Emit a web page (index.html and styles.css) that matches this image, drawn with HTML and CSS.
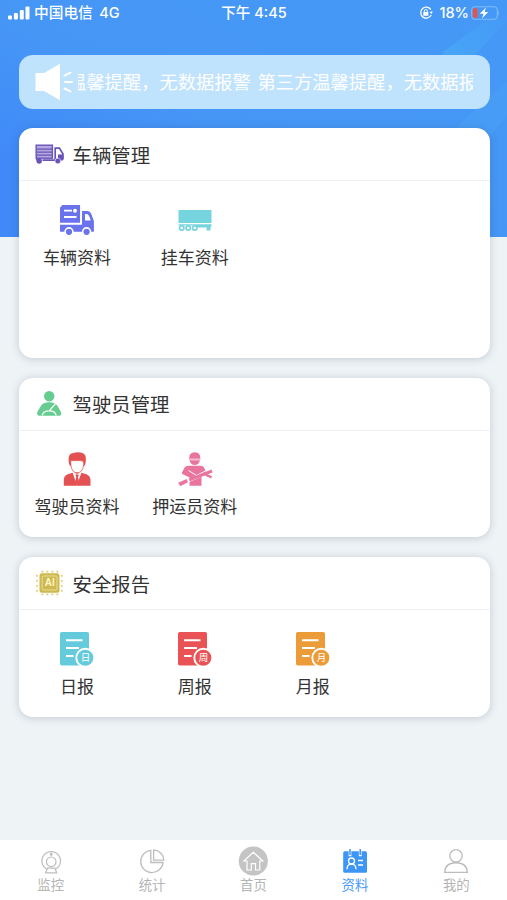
FILE: index.html
```html
<!DOCTYPE html>
<html lang="zh-CN">
<head>
<meta charset="utf-8">
<title>资料</title>
<link rel="stylesheet" href="styles.css">
</head>
<body>
<div class="app">
  <svg class="backdrop" viewBox="0 0 507 237" preserveAspectRatio="none">
    <defs>
      <linearGradient id="sky" x1="0" y1="0.7" x2="0.7" y2="0"><stop offset="0" stop-color="#3f89f8"/><stop offset="0.45" stop-color="#4696f6"/><stop offset="1" stop-color="#4598f5"/></linearGradient>
      <linearGradient id="ray" x1="0" y1="1" x2="1" y2="0"><stop offset="0" stop-color="#48a8f7"/><stop offset="1" stop-color="#48a8f7" stop-opacity="0.1"/></linearGradient>
    </defs>
    <rect width="507" height="237" fill="url(#sky)"/>
    <path d="M443 52 490 17 507 20 466 65 443 72Z" fill="url(#ray)"/>
    <path d="M455 128 507 82V116L489 137Z" fill="#48a0f7" opacity="0.7"/>
  </svg>

  <header class="status">
    <div class="status-side">
      <svg class="signal" width="22" height="14" viewBox="0 0 22 14" fill="#fff"><rect x="0" y="9.5" width="4" height="4" rx="1"/><rect x="5.9" y="7" width="4" height="6.5" rx="1"/><rect x="11.8" y="4" width="4" height="9.5" rx="1"/><rect x="17.5" y="0.5" width="4" height="13" rx="1"/></svg>
      <span class="carrier">中国电信</span><span>4G</span>
    </div>
    <div class="clock">下午 4:45</div>
    <div class="status-side status-right">
      <svg width="14" height="14" viewBox="0 0 14 14" fill="none" stroke="#fff" stroke-width="1.3"><path d="M11.8 3.6A5.5 5.5 0 1 0 12.2 9"/><path d="m10.6 6 2.1 2 1-2.8Z" fill="#fff" stroke="none"/><rect x="4.3" y="6" width="5" height="3.8" rx=".6" fill="#fff" stroke="none"/><path d="M5.3 6.2V5a1.5 1.5 0 0 1 3 0v1.2" stroke-width="1"/></svg>
      <span class="percent">18%</span>
      <svg width="29" height="14" viewBox="0 0 29 14"><rect x=".7" y=".7" width="25.6" height="12.6" rx="3.5" fill="none" stroke="#7dbcf9" stroke-width="1.1"/><path d="M27.4 4.5q1.8 2.5 0 5Z" fill="#7dbcf9"/><rect x="2" y="2.2" width="4.4" height="9.6" rx="1.3" fill="#ef5140"/><path d="M15 1.5 8.7 7.8h3.8L11 12.6l6.2-6.5h-3.7Z" fill="#fff"/></svg>
    </div>
  </header>

  <section class="notice">
    <svg width="38" height="38" viewBox="0 0 38 38" fill="#fff"><path d="M.5 10H9L25 .7V37.3L9 28H.5Z"/><path d="m29.5 12.5 6-2.8M30 19h7M29.5 25.5l6 2.8" stroke="#fff" stroke-width="2" stroke-linecap="round"/></svg>
    <div class="ticker"><p>温馨提醒，无数据报警 第三方温馨提醒，无数据报警</p></div>
  </section>

  <main>
    <section class="card card-tall">
      <h2>
        <svg width="30" height="26" viewBox="0 0 30 26"><g transform="translate(0 1.2)"><rect x="1.2" y="3" width="16.2" height="13" fill="#b5a8df" stroke="#6953b8" stroke-width="1.4"/><path d="M2 7h15.5M2 10h15.5M2 13h15.5" stroke="#6953b8" stroke-width="1.3"/><path d="M20.2 17.4V5.9h4.2l3.6 6v5.5" fill="none" stroke="#6953b8" stroke-width="1.7"/><path d="M22.4 8.2h1.6l2.4 4h-4Z" fill="#fff"/><path d="M23 12.3h5v6h-5Z" fill="#6953b8"/><path d="M1 17.6h2M7.5 17.9H20" stroke="#6953b8" stroke-width="1.6"/><circle cx="4.2" cy="18.8" r="2.7" fill="#6953b8"/><circle cx="22.8" cy="18.8" r="2.8" fill="#6953b8" stroke="#fff" stroke-width=".5"/></g></svg>
        车辆管理</h2>
      <div class="grid">
        <a class="item"><svg width="36" height="36" viewBox="0 0 36 36"><path d="M3.5 3H21.2V20.8H1V5.5Z" fill="#6a72ed"/><path d="M1 22.6h22V9h5.3q3 0 4.4 4l2.2 6v10.8H1Z" fill="#6a72ed"/><path d="M22 3v18.7H1" fill="none" stroke="#fff" stroke-width="1.5"/><path d="M26 12h1.8q2.4 0 3.8 6.6H26Z" fill="#fff"/><path d="M5 8.7h8M5 15h12.5" stroke="#fff" stroke-width="1.8"/><circle cx="16" cy="8.7" r="2" fill="#fff"/><g fill="#6a72ed" stroke="#fff" stroke-width="1.6"><circle cx="10" cy="29.8" r="3.9"/><circle cx="27.6" cy="29.8" r="3.9"/></g></svg><span>车辆资料</span></a>
        <a class="item"><svg width="36" height="36" viewBox="0 0 36 36"><path d="M1.5 8h33v13h-33Z" fill="#76d4df"/><path d="M1.5 22.3h33v2.4h-1V28.5h-4v-3H20l-1-2H1.5Z" fill="#76d4df"/><g fill="#fff" stroke="#76d4df" stroke-width="1.7"><circle cx="4.7" cy="26" r="2.2"/><circle cx="11.2" cy="26" r="2.2"/><circle cx="17.7" cy="26" r="2.2"/></g></svg><span>挂车资料</span></a>
      </div>
    </section>

    <section class="card">
      <h2>
        <svg width="30" height="26" viewBox="0 0 30 26"><circle cx="14.2" cy="5.2" r="5.2" fill="#66cc8f"/><path d="M2.4 21 6 14.8q2-3.6 8.2-3.6t8.2 3.6L26 21q1 3.7-2 3.7H4.7q-3.3 0-2.3-3.7Z" fill="#66cc8f"/><path d="M7.2 24.5q.8-4.6 7-4.6t7 4.6M20.3 12.8 14.5 19.6" fill="none" stroke="#fff" stroke-width="1.3"/></svg>
        驾驶员管理</h2>
      <div class="grid">
        <a class="item"><svg width="36" height="36" viewBox="0 0 36 36"><path d="M10.2 13.5Q8 3 13.5 2.2q9.5-2.4 12.5 1.8 1.7 3 .2 9.5l-1 1.5H11.4Z" fill="#e45152"/><path d="M11.8 9.6h9.7l3.2.8v3.4q-1 8-6.5 8t-6.4-8Z" fill="#fff" stroke="#e45152" stroke-width=".8"/><path d="M4.8 34.7V28.7q.3-4.2 4-5.5l4.7-1.4h9l4.7 1.4q3.9 1.3 4.3 5.5v6Z" fill="#e45152"/><path d="m13.2 20.8 4.8 13 4.8-13-4.8 2.2Z" fill="#fff"/><path d="m16.2 24 1.8-.8 1.9.8-.9 2 1 5-1.9 3-1.9-3 1.1-5Z" fill="#e45152"/></svg><span>驾驶员资料</span></a>
        <a class="item"><svg width="36" height="36" viewBox="0 0 36 36"><path d="M12.2 7.4Q12 1.5 17.7 1.3T23.3 7.4Z" fill="#e9759f"/><path d="M12.4 9.3h10.6Q22 14 17.8 14T12.4 9.3Z" fill="#e9759f"/><path d="M12 8h11.5" stroke="#e9759f" stroke-width="1"/><path d="M5 21.5 7.5 16.5q1.3-1.8 4-1.8h12q3.5 0 4.5 4l.5 3-4 2.5v10.5H12.5V26.5l-5-2.5Q4.5 23 5 21.5Z" fill="#e9759f"/><path d="M10.5 31.3 26 24.5" stroke="#fff" stroke-width="1"/><path d="m11.5 19.5 8 5 8.5-4.3" fill="none" stroke="#fff" stroke-width="1"/><path d="M1.2 31.8 9.5 28l1.5 3.2-7.8 4Z" fill="#e9759f"/><path d="M12.5 28.8 35 20" stroke="#e9759f" stroke-width="3"/><path d="m27.5 23 7 3.4" stroke="#e9759f" stroke-width="2.5"/></svg><span>押运员资料</span></a>
      </div>
    </section>

    <section class="card">
      <h2>
        <svg width="30" height="26" viewBox="0 0 30 26"><g stroke="#dccb79" stroke-width="1.7" stroke-dasharray="1.8 3.2"><path d="M6.5 1.6h17M6.5 24.4h17M2 5v17M26.8 5v17"/></g><rect x="4.5" y="3.3" width="20" height="19.4" rx="2.5" fill="#cdb94e"/><rect x="7.2" y="6" width="14.8" height="14" rx="1" fill="none" stroke="#e8dc9a" stroke-width="1"/><text class="chip" x="14.7" y="16.3">AI</text></svg>
        安全报告</h2>
      <div class="grid">
        <a class="item day"><svg width="36" height="36" viewBox="0 0 36 36"><rect x="1" y="1" width="29" height="33.5" rx="1.8" fill="currentColor"/><path d="M7 9.2h16.5M7 17h13M7 24.9h7.5" stroke="#fff" stroke-width="2"/><circle cx="26.3" cy="26.7" r="9" fill="currentColor" stroke="#fff" stroke-width="1.9"/><text class="seal" x="26.4" y="30.3">日</text></svg><span>日报</span></a>
        <a class="item week"><svg width="36" height="36" viewBox="0 0 36 36"><rect x="1" y="1" width="29" height="33.5" rx="1.8" fill="currentColor"/><path d="M7 9.2h16.5M7 17h13M7 24.9h7.5" stroke="#fff" stroke-width="2"/><circle cx="26.3" cy="26.7" r="9" fill="currentColor" stroke="#fff" stroke-width="1.9"/><text class="seal" x="26.4" y="30.3">周</text></svg><span>周报</span></a>
        <a class="item month"><svg width="36" height="36" viewBox="0 0 36 36"><rect x="1" y="1" width="29" height="33.5" rx="1.8" fill="currentColor"/><path d="M7 9.2h16.5M7 17h13M7 24.9h7.5" stroke="#fff" stroke-width="2"/><circle cx="26.3" cy="26.7" r="9" fill="currentColor" stroke="#fff" stroke-width="1.9"/><text class="seal" x="26.4" y="30.3">月</text></svg><span>月报</span></a>
      </div>
    </section>
  </main>

  <nav class="tabs">
    <a><svg width="30" height="30" viewBox="0 0 30 30" fill="none" stroke="#bdbdbd" stroke-width="1.2"><path d="M11 23.2a9.3 9.3 0 1 1 8.4 0"/><circle cx="15.2" cy="15.8" r="4.8"/><circle cx="15.2" cy="8.3" r=".9" fill="#bdbdbd"/><path d="M11.5 22.2h7.4l1.8 4.6h-11Z"/></svg><span>监控</span></a>
    <a><svg width="30" height="30" viewBox="0 0 30 30" fill="none" stroke="#bdbdbd" stroke-width="1.3"><path d="M13.8 4.3a11.2 11.2 0 1 0 12.3 12.2H13.8Z"/><path d="M16.6 3.9a10.6 10.6 0 0 1 10.2 10.3H16.6Z"/></svg><span>统计</span></a>
    <a><svg width="30" height="30" viewBox="0 0 30 30"><circle cx="15.3" cy="15" r="14.6" fill="#c4c4c4"/><path d="M5.8 15 15.3 6.2 24.8 15H21.8V24H17.5V17.7H13.3V24H9V15Z" fill="none" stroke="#fff" stroke-width="1.2"/></svg><span>首页</span></a>
    <a class="active"><svg width="30" height="30" viewBox="0 0 30 30"><rect x="3.2" y="5.2" width="23.8" height="21.6" rx="1.5" fill="#3d95f5"/><path d="M10 5v5.2M20.2 5v5.2" stroke="#fff" stroke-width="2.8"/><path d="M10 3v6M20.2 3v6" stroke="#3d95f5" stroke-width="1.5"/><g fill="none" stroke="#fff" stroke-width="1.3"><circle cx="11.5" cy="15" r="3"/><path d="M7 23.2q0-5 4.5-5t4.5 5M18 14.5h5M18 19h5"/></g></svg><span>资料</span></a>
    <a><svg width="30" height="30" viewBox="0 0 30 30" fill="none" stroke="#bdbdbd" stroke-width="1.4"><circle cx="15" cy="9.8" r="6.2"/><path d="M3.7 26.4q.5-9.6 11.3-9.6t11.3 9.6Z"/></svg><span>我的</span></a>
  </nav>
</div>
</body>
</html>
```
FILE: styles.css
```css
* { box-sizing: border-box; }
body {
  margin: 0;
  font-family: "Noto Sans CJK SC", sans-serif;
  color: #333;
  background: #eef3f6;
}
svg { display: block; flex: none; }
.app {
  position: relative;
  isolation: isolate;
  display: flex;
  flex-direction: column;
  width: 507px;
  height: 900px;
  overflow: hidden;
}
.backdrop {
  position: absolute;
  top: 0;
  left: 0;
  z-index: -1;
  width: 100%;
  height: 237px;
}
.status {
  display: grid;
  grid-template-columns: 1fr auto 1fr;
  align-items: center;
  height: 26px;
  padding: 0 7px 0 8px;
  font: 500 14.5px/26px Inter, "Noto Sans CJK SC", sans-serif;
  color: #fff;
}
.status-side { display: flex; align-items: center; }
.status-right { justify-content: flex-end; }
.carrier { margin: 0 6.5px 0 4px; font-size: 14.7px; }
.percent { margin: 0 2px 0 6px; }
.notice {
  display: flex;
  align-items: center;
  height: 54px;
  margin: 28.5px 17.5px 0 19px;
  padding: 0 17px 0 16px;
  border-radius: 14px;
  background: #bfe2fd;
}
.ticker { flex: 1; margin-left: 5px; overflow: hidden; }
.ticker p {
  margin: 0 0 0 -10px;
  font-size: 18.3px;
  line-height: 27px;
  word-spacing: 2.5px;
  white-space: nowrap;
  color: #fff;
}
main {
  flex: 1;
  display: flex;
  flex-direction: column;
  gap: 20px;
  margin: 19.5px 17.5px 0 19px;
}
.card {
  height: 159.5px;
  border-radius: 14px;
  background: #fff;
  box-shadow: 0 1px 8px rgba(40, 60, 80, 0.22);
}
.card-tall { height: 229.5px; }
.card h2 {
  display: flex;
  align-items: center;
  gap: 7.5px;
  height: 53px;
  margin: 0;
  padding-left: 16px;
  border-bottom: 1px solid #eef0f2;
  font-size: 19.4px;
  font-weight: 400;
}
.grid { display: grid; grid-template-columns: repeat(4, 1fr); margin-left: -1px; }
.item {
  display: flex;
  flex-direction: column;
  align-items: center;
  padding-top: 20.5px;
}
.item span {
  margin-top: 6px;
  font-size: 17px;
  line-height: 26px;
  color: #333;
}
.day { color: #65cbdc; }
.week { color: #e95355; }
.month { color: #eb9b38; }
.item .seal { font-size: 9.5px; text-anchor: middle; fill: #fff; }
.chip { font: 700 10px "Liberation Sans", sans-serif; text-anchor: middle; fill: #fff6c8; }
.tabs {
  display: grid;
  grid-template-columns: repeat(5, 1fr);
  height: 60px;
  background: #fff;
}
.tabs a {
  display: flex;
  flex-direction: column;
  align-items: center;
  padding-top: 6px;
  font-size: 13.4px;
  line-height: 17px;
  color: #b5b5b5;
}
.tabs .active { color: #4a9bf5; }
```
